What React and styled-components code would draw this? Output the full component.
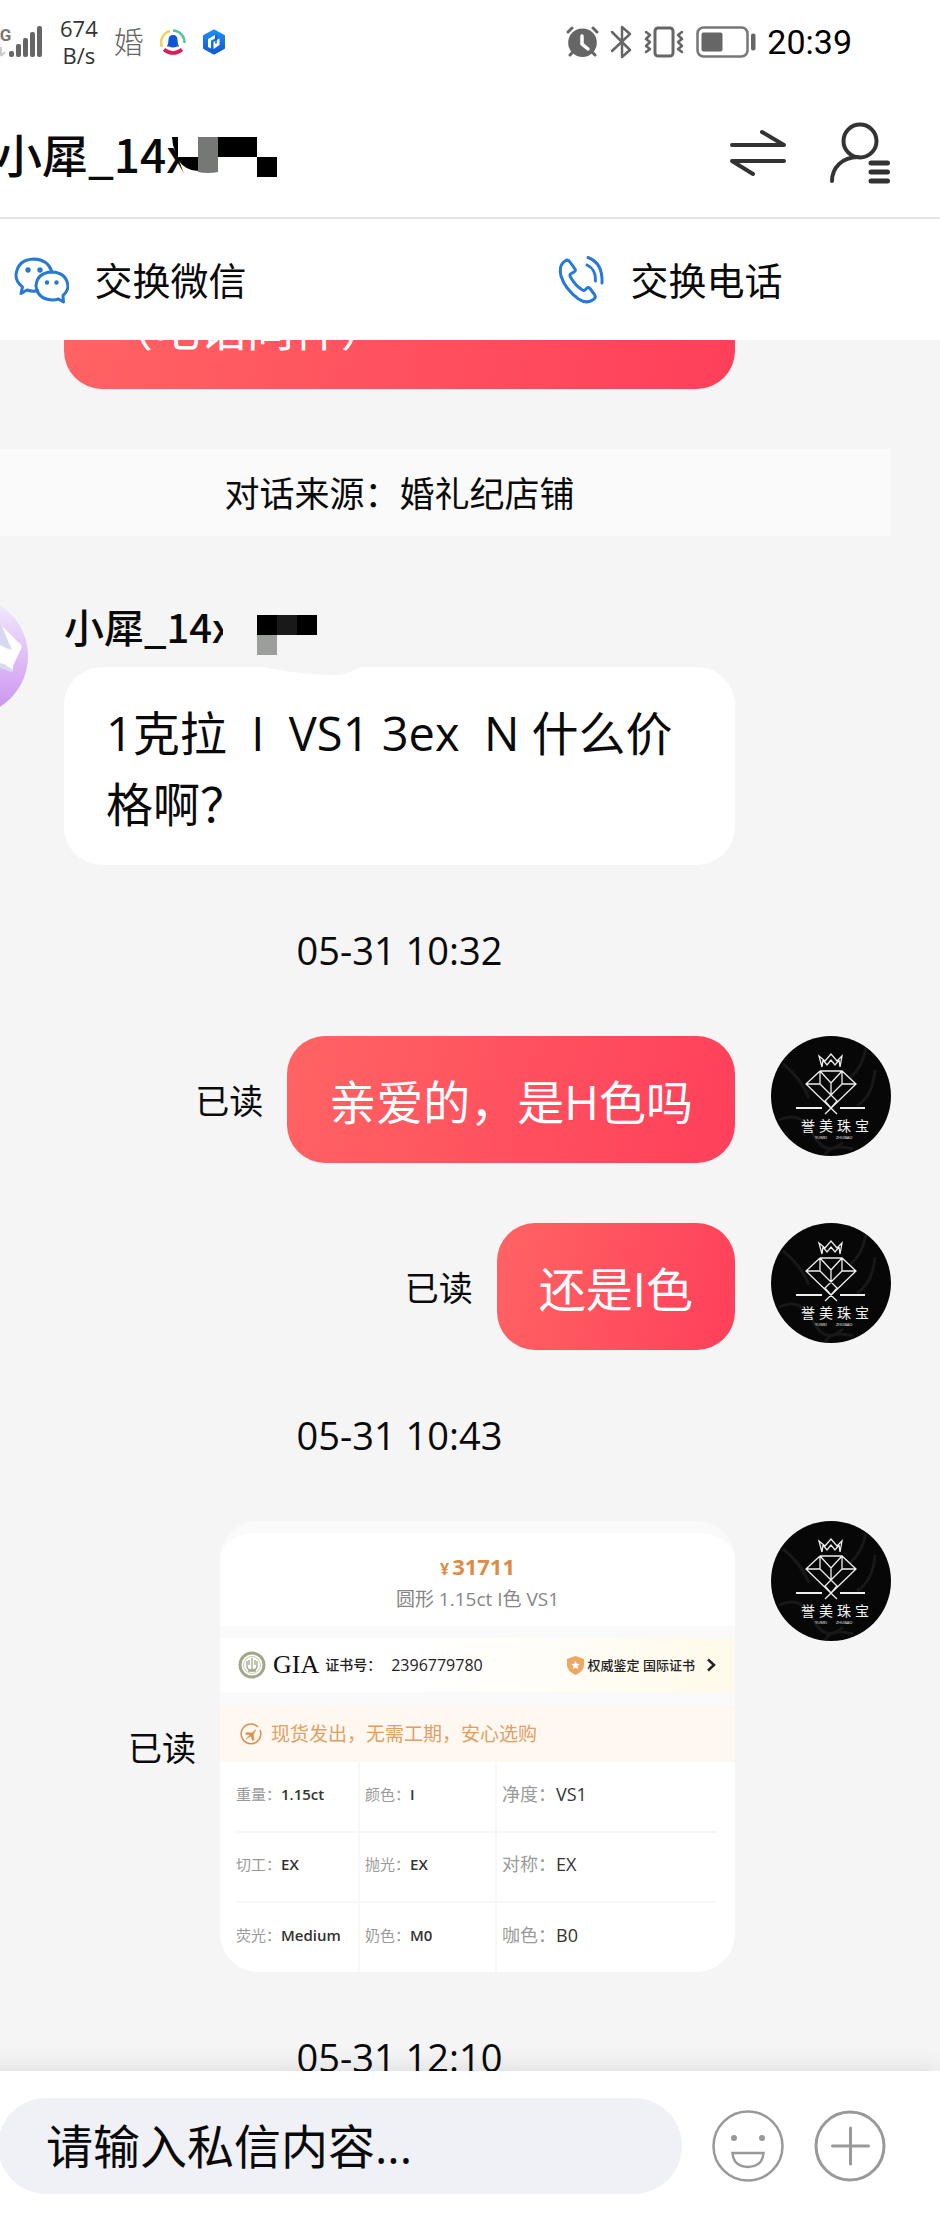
import React from 'react';
import styled, { createGlobalStyle } from 'styled-components';

const textFont = '"Open Sans", "Noto Sans CJK SC", sans-serif';
const nameFont = '"Noto Sans CJK SC", sans-serif';

const GlobalStyle = createGlobalStyle`
  *, *::before, *::after { box-sizing: border-box; }
  body { margin: 0; background: #fff; color: #0a0a0a; font-family: ${textFont}; }
  button { border: 0; padding: 0; background: none; color: inherit; font: inherit; cursor: pointer; }
  svg { display: block; flex: none; }
`;

/* The screen is wider than the window and runs out past its left edge. */
const Viewport = styled.div`
  overflow: hidden;
`;

const Screen = styled.div`
  display: flex;
  flex-direction: column;
  width: calc(100% + 140px);
  height: 100vh;
  margin-left: -140px;
`;

const StatusBar = styled.div`
  display: flex;
  flex: none;
  justify-content: space-between;
  height: 88px;
  padding: 0 88px 4px 132px;
`;

const StatusGroup = styled.div`
  display: flex;
  align-items: center;
  gap: ${(p) => p.$gap}px;
`;

const Rate = styled.span`
  font-size: 22px;
  line-height: 27px;
  text-align: center;
  color: #333;
`;

const AppGlyph = styled.span`
  font-size: 30px;
  font-weight: 300;
  line-height: 32px;
  color: #666;
`;

const Clock = styled.time`
  font: 34px/40px Roboto, sans-serif;
  color: #000;
`;

const Header = styled.header`
  display: flex;
  flex: none;
  align-items: center;
  height: 131px;
  padding: 0 50px 0 136px;
  border-bottom: 2px solid #e6e6e6;
`;

const Title = styled.h1`
  position: relative;
  flex: 1;
  margin: 0;
  font: 500 46px/56px ${nameFont};
`;

const Redaction = styled.svg`
  position: absolute;
  top: 0;
  left: ${(p) => p.$left}px;
`;

const HeaderButtons = styled.div`
  display: flex;
  align-items: center;
  gap: 42px;
`;

const Actions = styled.nav`
  display: flex;
  flex: none;
  height: 121px;
`;

const ActionButton = styled.button`
  display: flex;
  flex: 1;
  align-items: center;
  justify-content: center;
  gap: 25px;
  && { font-size: 38px; line-height: 56px; }
`;

const Chat = styled.main`
  display: flex;
  flex: 1;
  flex-direction: column;
  gap: 60px;
  min-height: 0;
  padding: 0 49px 0 48px;
  overflow: hidden;
  background: #f5f5f5;

  & > * { flex: none; }
`;

const Message = styled.article`
  display: flex;
  align-items: flex-start;
  gap: 36px;
  justify-content: ${(p) => (p.$own ? 'flex-end' : 'flex-start')};
  padding-left: ${(p) => (p.$own ? 156 : 0)}px;
  padding-right: ${(p) => (p.$own ? 0 : 156)}px;
`;

/* Scrolled most of the way under the toolbar. */
const ScrolledMessage = styled(Message)`
  margin-top: -78px;
  padding-right: 156px;
`;

const Column = styled.div`
  flex: 1;
`;

const SenderName = styled.div`
  position: relative;
  padding-bottom: 11px;
  font: 500 40px/60px ${nameFont};
`;

const Bubble = styled.p`
  flex: ${(p) => (p.$wide ? 1 : 'none')};
  margin: 0;
  padding: 31px 42px 25px;
  border-radius: 38px;
  font-size: 47px;
  line-height: 71px;
  white-space: pre-wrap;
  color: ${(p) => (p.$own ? '#fff' : '#0a0a0a')};
  background: ${(p) => (p.$own ? 'linear-gradient(105deg, #ff6464, #ff3f5a)' : '#fff')};
`;

const Delivered = styled.div`
  display: flex;
  align-items: center;
  gap: 24px;
`;

const ReadMark = styled.span`
  padding-top: 3px;
  font-size: 34px;
  line-height: 50px;
`;

const Notice = styled.div`
  padding-top: 2px;
  font-size: 35px;
  line-height: 85px;
  text-align: center;
  background: #fafafa;
`;

const Timestamp = styled.time`
  font-size: 38px;
  line-height: 51px;
  text-align: center;
`;

const Card = styled.section`
  width: 515px;
  overflow: hidden;
  border-radius: 38px;
  background: #fff;
  border-top: 12px solid #fafafa;
`;

const CardHead = styled.div`
  display: flex;
  flex-direction: column;
  align-items: center;
  height: 93px;
  padding-top: 18px;
`;

const Price = styled.strong`
  font-size: 22px;
  line-height: 30px;
  color: #dc8c45;

  small { margin-right: 3px; font-size: 16px; }
`;

const Spec = styled.span`
  font-size: 19px;
  line-height: 30px;
  color: #868686;
`;

const Certificate = styled.div`
  display: flex;
  align-items: center;
  height: 80px;
  padding: 0 18px;
  border: solid #fafafa;
  border-width: 12px 0 14px;
  font-size: 14px;
  font-weight: 500;
  line-height: 20px;
  color: #222;
  background: linear-gradient(90deg, #fff 40%, #fffae9);
`;

const Gia = styled.span`
  margin: 0 6px 0 7px;
  font: 26px/30px "Liberation Serif", serif;
  color: #111;
`;

const CertNumber = styled.span`
  margin-left: 10px;
  font-size: 16px;
`;

const Authority = styled.a`
  display: flex;
  align-items: center;
  gap: 3px;
  margin-left: auto;
  font-size: 13px;
  color: inherit;
  text-decoration: none;

  svg:last-child { margin-left: 7px; }
`;

const Promise = styled.div`
  display: flex;
  align-items: center;
  gap: 9px;
  height: 56px;
  padding-left: 20px;
  font-size: 19px;
  line-height: 28px;
  color: #dfa065;
  background: #fef8f1;
`;

const TableArea = styled.div`
  padding: 0 18px 0 16px;
`;

const Specs = styled.table`
  width: 100%;
  border-collapse: collapse;
  table-layout: fixed;

  col:nth-child(1) { width: 123px; }
  col:nth-child(2) { width: 137px; }
`;

const SpecRow = styled.tr`
  height: 70px;
  & + & td { border-top: 2px solid #f7f7f7; }
`;

const SpecCell = styled.td`
  padding: 0 0 6px ${(p) => (p.$first ? 0 : 5)}px;
  border-left: ${(p) => (p.$first ? 0 : 2)}px solid #f8f8f8;
  font-size: ${(p) => (p.$large ? 18 : 15)}px;
  font-weight: ${(p) => (p.$large ? 500 : 600)};
  line-height: 24px;
  white-space: nowrap;
  color: #333;

  span { font-weight: 400; color: #9a9a9a; }
`;

const Composer = styled.form`
  position: relative;
  display: flex;
  flex: none;
  align-items: center;
  gap: 30px;
  padding: 27px 54px 42px 138px;
  background: #fff;
  box-shadow: 0 0 26px rgba(0, 0, 0, 0.12);
`;

const MessageInput = styled.input`
  flex: 1;
  min-width: 0;
  height: 96px;
  padding: 0 48px;
  border: 0;
  border-radius: 48px;
  outline: 0;
  background: #f0f1f6;
  font: 47px/60px ${textFont};

  &::placeholder { color: #0a0a0a; opacity: 1; }
`;

const SignalIcon = () => (
  <svg width="52" height="36" viewBox="0 0 52 36" fill="#666">
    <text x="-2" y="17" fontFamily="Roboto, sans-serif" fontSize="17" fontWeight="700" fill="#777">5G</text>
    <path d="M9 23v9m0 0 4-4" stroke="#ccc" strokeWidth="2" fill="none" />
    <rect x="17" y="27" width="5" height="6" rx="2" />
    <rect x="24" y="20" width="5" height="13" rx="2" />
    <rect x="31" y="14" width="5" height="19" rx="2" />
    <rect x="38" y="8" width="5" height="25" rx="2" />
    <rect x="45" y="2" width="5" height="31" rx="2" />
  </svg>
);

const RingIcon = () => (
  <svg width="26" height="26" viewBox="0 0 26 26" fill="none" strokeWidth="2.500">
    <path d="M2 18A12 12 0 0 1 10 2" stroke="#efd35a" />
    <path d="M13 1.500A12 12 0 0 1 24.500 14" stroke="#55c39b" />
    <path d="M4 20.500q9 7 18 0" stroke="#d81e55" strokeWidth="3.500" />
    <path d="M9 17.500H6.800Q8.500 15 8.500 11q0-5 4.500-5t4.500 5q0 4 1.700 6.500H17q-4 2-8 0Z" fill="#1255d4" />
  </svg>
);

const HexIcon = () => (
  <svg width="24" height="26" viewBox="0 0 24 26">
    <defs>
      <linearGradient id="hex" x2="0" y2="1">
        <stop stopColor="#1d8df5" />
        <stop offset="1" stopColor="#1258cf" />
      </linearGradient>
    </defs>
    <path d="M12 1.500 22 7v12l-10 5.500L2 19V7Z" fill="url(#hex)" stroke="url(#hex)" strokeWidth="2" strokeLinejoin="round" />
    <path d="m6 10 7-4v3.500l-4 2v8l-3-1.500Z" fill="#fff" />
    <path d="m11.500 13 6-3.500V16l-6 4Z" fill="#fff" />
    <path d="M14 6v8.500" fill="none" stroke="#1658c8" strokeWidth="1.500" />
  </svg>
);

const AlarmIcon = () => (
  <svg width="33" height="34" viewBox="0 0 33 34" fill="none" stroke="#666" strokeWidth="3" strokeLinecap="round">
    <circle cx="16.500" cy="17.700" r="14.300" fill="#666" stroke="none" />
    <path d="m2 7 4-4M31 7l-4-4M4 30l3-3M29 30l-3-3" />
    <path d="M16 11v8l6 5" stroke="#fff" strokeWidth="3.500" />
  </svg>
);

const BluetoothIcon = () => (
  <svg width="22" height="34" viewBox="0 0 22 34" fill="none" stroke="#666" strokeWidth="2.500" strokeLinejoin="round" strokeLinecap="round">
    <path d="m2 7 18 18-8 7V2l8 7L2 26" />
  </svg>
);

const VibrateIcon = () => (
  <svg width="42" height="34" viewBox="0 0 42 34" fill="none" stroke="#666" strokeLinejoin="round" strokeLinecap="round">
    <rect x="12" y="3" width="18" height="28" rx="3" strokeWidth="3" />
    <path d="m3 7 4 3-4 4 4 3-4 4 4 3-4 3M39 7l-4 3 4 4-4 3 4 4-4 3 4 3" strokeWidth="2.500" />
  </svg>
);

const BatteryIcon = () => (
  <svg width="60" height="34" viewBox="0 0 60 34" fill="#666">
    <rect x="1.500" y="2.500" width="50" height="29" rx="6" fill="none" stroke="#777" strokeWidth="2.500" />
    <rect x="5.500" y="7.500" width="21" height="19" rx="2" />
    <rect x="55" y="8.500" width="4.500" height="17" rx="2" />
  </svg>
);

const ArrowsIcon = () => (
  <svg width="58" height="48" viewBox="0 0 58 48" fill="none" stroke="#333" strokeWidth="4" strokeLinecap="round" strokeLinejoin="round">
    <path d="M3 16h52L33 3M55 32H3l21 13" />
  </svg>
);

const UserMenuIcon = () => (
  <svg width="61" height="64" viewBox="0 0 61 64" fill="none" stroke="#333" strokeWidth="4" strokeLinecap="round">
    <circle cx="31" cy="20" r="16.500" />
    <path d="M3 60C3 47 13 36 29 36" />
    <path d="M42 42h16.500M42 51h16.500M42 60h16.500" strokeWidth="5" />
  </svg>
);

const WechatIcon = () => (
  <svg width="56" height="48" viewBox="0 0 56 48" fill="none" stroke="#2878d8" strokeWidth="3" strokeLinejoin="round">
    <path d="M26 34.500q-6 1.500-12-.5l-6 3.500 1.500-6.500Q3 26 3 19 4.500 3.500 21 3q14 .5 18 13" />
    <path d="M50 39.500q5-4 5-10-2-13-16-13.500-15 .5-16 14 1.500 13 16 14 4 0 6.500-1l5 3Z" />
    <g fill="#2878d8" stroke="none">
      <circle cx="15" cy="14" r="2.700" /><circle cx="27" cy="14" r="2.700" />
      <circle cx="34" cy="26.500" r="2.200" /><circle cx="43.500" cy="26.500" r="2.200" />
    </g>
  </svg>
);

const PhoneIcon = () => (
  <svg width="48" height="50" viewBox="0 0 48 50" fill="none" stroke="#2878d8" strokeWidth="3" strokeLinejoin="round" strokeLinecap="round">
    <path d="M8 6q3-2 5 1l5 7q1 2-1 3l-3.500 2q-1 1 0 3 5 9 12 13 1.500 1 2.500 0l2-2q1.500-1 3 .500l4.500 6q2 3-1 5-7 5-15-.500Q8 34 4 21 1.500 10 8 6Z" />
    <path d="M31 2.500Q46 8 45 28M30 10q9 4 8.500 16" />
  </svg>
);

const CustomerAvatar = () => (
  <svg width="120" height="120" viewBox="0 0 120 120">
    <defs>
      <linearGradient id="lilac" x2="0" y2="1">
        <stop stopColor="#f6effc" />
        <stop offset="1" stopColor="#c88ff0" />
      </linearGradient>
    </defs>
    <circle cx="60" cy="60" r="60" fill="url(#lilac)" />
    <path d="M80 16 110 46q5 3 3 7l-8 17q0 3-1 6L80 66Z" fill="#fff" />
    <path d="m80 18 12 8 12 28q-12-3-24-14ZM80 65l16 3 8 5v3l-12-4Z" fill="#d9d8f1" />
  </svg>
);

const ShopAvatar = () => (
  <svg width="120" height="120" viewBox="0 0 120 120" fill="none" stroke="#eee" strokeWidth="1.300">
    <circle cx="60" cy="60" r="60" fill="#070707" stroke="none" />
    <path d="M12 28q18 14 26 34M95 12q-4 20-16 30M104 34q-2 26-18 36M8 84q22-10 34 14t30 8M54 119q6-12 28-6" stroke="#181818" strokeWidth="3" />
    <path d="m51 31-3-11 6 5 6-7 6 7 5-5-2 11M51 31l1-7 4 5 4-5 4 5 4-5 1 7" />
    <path d="M49 35h22l14 13-31 30M49 35 35 48l31 30M49 35v13H35M71 35v13h14M49 35l11 12 11-12M60 47v13M49 48l17 17-6 7-6-7 17-17" />
    <path d="M25 72h26M69 72h25" strokeWidth="2" />
    <g fill="#f4f4f4" stroke="none">
      <text x="30 48 66 84" y="95" fontFamily="Noto Sans CJK SC, sans-serif" fontSize="14">誉美珠宝</text>
      <text x="44" y="103" fontFamily="Open Sans, sans-serif" fontSize="4">YUMEI</text>
      <text x="65" y="103" fontFamily="Open Sans, sans-serif" fontSize="4">ZHUBAO</text>
    </g>
  </svg>
);

const SealIcon = () => (
  <svg width="28" height="28" viewBox="0 0 28 28" fill="none" stroke="#a3a78a">
    <circle cx="14" cy="14" r="12" strokeWidth="3" />
    <circle cx="14" cy="14" r="8.500" stroke="#c5c9b2" />
    <path d="M14 7v13M9 10v5q0 4 5 4t5-4v-5M11 9v5M17 9v5M10 20h8" strokeWidth="1.300" />
  </svg>
);

const ShieldIcon = () => (
  <svg width="19" height="19" viewBox="0 0 19 19">
    <path d="m9.500 0 8.500 3v6q0 6-8.500 10Q1 15 1 9V3Z" fill="#efa763" />
    <path d="m9.500 5 1.300 2.700 3 .4-2.200 2 .6 3-2.700-1.400-2.700 1.400.6-3-2.200-2 3-.4Z" fill="#fff" />
  </svg>
);

const ChevronIcon = () => (
  <svg width="12" height="14" viewBox="0 0 12 14" fill="none" stroke="#222" strokeWidth="2.500">
    <path d="m3 1.500 6 5.500-6 5.500" />
  </svg>
);

const PlaneIcon = () => (
  <svg width="22" height="22" viewBox="0 0 22 22" fill="none" stroke="#d99152" strokeWidth="1.500">
    <path d="M18 4a9.800 9.800 0 1 0 2 3" />
    <path d="m6 16 4-4-5-1 2-1.500 5 .5 4-3.500-2.500 5 .5 5-1.500 1.500-1.500-5Z" fill="#d99152" strokeWidth=".5" />
  </svg>
);

const SmileIcon = () => (
  <svg width="72" height="72" viewBox="0 0 72 72" fill="none" stroke="#999" strokeWidth="2.500">
    <circle cx="36" cy="36" r="34.500" />
    <path d="M20.500 43h31q-1 13.500-15.500 14-14.500-.5-15.500-14Z" />
    <circle cx="22" cy="28" r="3" fill="#999" stroke="none" />
    <circle cx="50" cy="28" r="3" fill="#999" stroke="none" />
  </svg>
);

const PlusIcon = () => (
  <svg width="72" height="72" viewBox="0 0 72 72" fill="none" stroke="#999" strokeWidth="3" strokeLinecap="round">
    <circle cx="36" cy="36" r="34" />
    <path d="M18.500 36h36M36.500 18v36" />
  </svg>
);

const specs = [
  [['重量', '1.15ct'], ['颜色', 'I'], ['净度', 'VS1']],
  [['切工', 'EX'], ['抛光', 'EX'], ['对称', 'EX']],
  [['荧光', 'Medium'], ['奶色', 'M0'], ['咖色', 'B0']],
];

const DiamondCard = () => (
  <Card>
    <CardHead>
      <Price><small>¥</small>31711</Price>
      <Spec>圆形 1.15ct I色 VS1</Spec>
    </CardHead>
    <Certificate>
      <SealIcon />
      <Gia>GIA</Gia>
      证书号：
      <CertNumber>2396779780</CertNumber>
      <Authority href="#certificate">
        <ShieldIcon />
        权威鉴定 国际证书
        <ChevronIcon />
      </Authority>
    </Certificate>
    <Promise>
      <PlaneIcon />
      现货发出，无需工期，安心选购
    </Promise>
    <TableArea>
      <Specs>
        <colgroup><col /><col /><col /></colgroup>
        <tbody>
          {specs.map((row) => (
            <SpecRow key={row[0][0]}>
              {row.map(([label, value], i) => (
                <SpecCell key={label} $first={i === 0} $large={i === 2}>
                  <span>{label}：</span>{value}
                </SpecCell>
              ))}
            </SpecRow>
          ))}
        </tbody>
      </Specs>
    </TableArea>
  </Card>
);

const OwnMessage = ({ children }) => (
  <Message $own>
    <Delivered>
      <ReadMark>已读</ReadMark>
      {children}
    </Delivered>
    <ShopAvatar />
  </Message>
);

export default function App() {
  return (
    <Viewport>
      <GlobalStyle />
      <Screen>
        <StatusBar>
          <StatusGroup $gap={16}>
            <SignalIcon />
            <Rate>674<br />B/s</Rate>
            <AppGlyph>婚</AppGlyph>
            <RingIcon />
            <HexIcon />
          </StatusGroup>
          <StatusGroup $gap={11}>
            <AlarmIcon />
            <BluetoothIcon />
            <VibrateIcon />
            <BatteryIcon />
            <Clock>20:39</Clock>
          </StatusGroup>
        </StatusBar>

        <Header>
          <Title>
            小犀_14x
            <Redaction $left={172} width="116" height="60" viewBox="0 0 116 60">
              <path d="M9 0h107v60H20L9 30Z" fill="#fff" />
              <path d="M4 12h6v20h20v14q-12 0-20-11L5 20Z" />
              <path d="M30 12h20v35q-10 2-20 0Z" fill="#757874" />
              <path d="M50 12h39v20H50ZM89 32h20v20H89Z" />
            </Redaction>
          </Title>
          <HeaderButtons>
            <button type="button" aria-label="切换"><ArrowsIcon /></button>
            <button type="button" aria-label="客户资料"><UserMenuIcon /></button>
          </HeaderButtons>
        </Header>

        <Actions>
          <ActionButton type="button"><WechatIcon />交换微信</ActionButton>
          <ActionButton type="button"><PhoneIcon />交换电话</ActionButton>
        </Actions>

        <Chat>
          <ScrolledMessage $own>
            <Bubble $own $wide>（电话同件）</Bubble>
          </ScrolledMessage>

          <Notice>对话来源：婚礼纪店铺</Notice>

          <Message>
            <CustomerAvatar />
            <Column>
              <SenderName>
                小犀_14x
                <Redaction $left={159} width="150" height="80" viewBox="0 0 150 80">
                  <path d="M0 0h150v71h-11l-12 5q-10 4-22 3-40-2-63-8H0V50l-4-15Z" fill="#f5f5f5" />
                  <path d="M34 19h60v20H34Z" />
                  <path d="M54 19h20v20H54Z" fill="#191919" />
                  <path d="M34 39h20v20H34Z" fill="#9c9e9b" />
                </Redaction>
              </SenderName>
              <Bubble>{'1克拉  I  VS1 3ex  N 什么价格啊？'}</Bubble>
            </Column>
          </Message>

          <Timestamp>05-31 10:32</Timestamp>
          <OwnMessage><Bubble $own>亲爱的，是H色吗</Bubble></OwnMessage>
          <OwnMessage><Bubble $own>还是I色</Bubble></OwnMessage>
          <Timestamp>05-31 10:43</Timestamp>
          <OwnMessage><DiamondCard /></OwnMessage>
          <Timestamp>05-31 12:10</Timestamp>
        </Chat>

        <Composer>
          <MessageInput type="text" aria-label="私信内容" placeholder="请输入私信内容..." />
          <button type="button" aria-label="表情"><SmileIcon /></button>
          <button type="button" aria-label="更多"><PlusIcon /></button>
        </Composer>
      </Screen>
    </Viewport>
  );
}
